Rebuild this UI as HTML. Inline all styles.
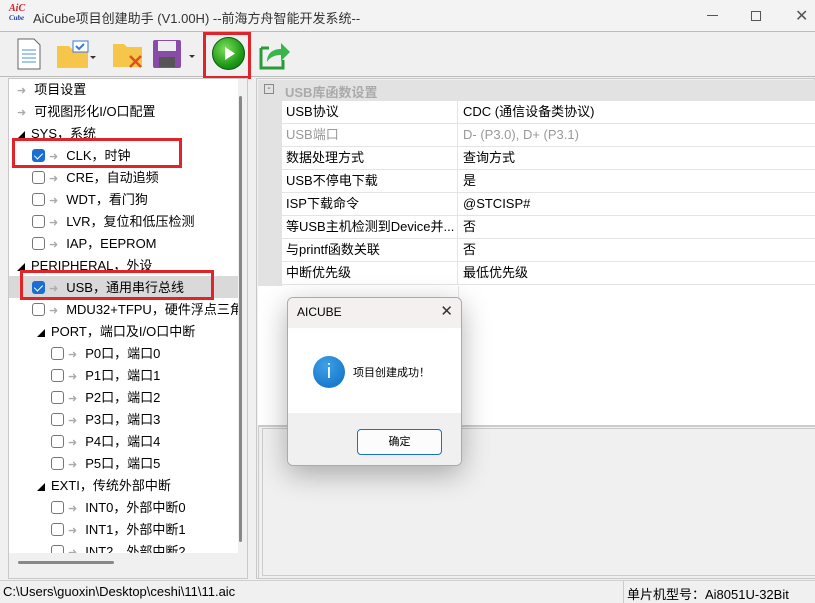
<!DOCTYPE html>
<html><head><meta charset="utf-8"><style>
*{margin:0;padding:0;box-sizing:border-box}
body{width:815px;height:603px;overflow:hidden;background:#f0f0f0;font-family:"Liberation Sans","Noto Sans CJK SC",sans-serif;font-size:13px;color:#000;position:relative}
.a{position:absolute}
.tr{position:absolute;height:22px;line-height:22px;white-space:nowrap;font-size:13px}
.cb{display:inline-block;width:13px;height:13px;border:1px solid #777;border-radius:3px;vertical-align:-2px;background:#fff}
.cb.on{background:#1a6fd0;border-color:#1a6fd0;position:relative}
.cb.on:after{content:"";position:absolute;left:3px;top:1px;width:4px;height:7px;border:solid #fff;border-width:0 1.5px 1.5px 0;transform:rotate(45deg)}
.ar{color:#aaa;font-size:11px;margin:0 8px 0 4px}
.row{position:absolute;left:282px;width:533px;height:23px;border-bottom:1px solid #e4e4e4;background:#fff;line-height:22px}
.row span{position:absolute;left:4px}
.row b{font-weight:normal;position:absolute;left:181px}
.row i{position:absolute;left:175px;top:0;bottom:0;border-left:1px solid #e4e4e4}
</style></head><body>
<!-- title bar -->
<div class="a" style="left:0;top:0;width:815px;height:32px;background:#f3f3f3;border-bottom:1px solid #bbb"></div>
<div class="a" style="left:9px;top:4px;font:italic bold 10px 'Liberation Serif',serif;color:#d0202a;line-height:9px">AiC<br><span style="font-size:7px;color:#1c3f9c">Cube</span></div>
<div class="a" style="left:33px;top:8px;font-size:13px;color:#333">AiCube项目创建助手 (V1.00H) --前海方舟智能开发系统--</div>
<div class="a" style="left:707px;top:15px;width:11px;height:1px;background:#555"></div>
<div class="a" style="left:751px;top:11px;width:10px;height:10px;border:1px solid #555"></div>
<div class="a" style="left:795px;top:6px;font-size:16px;color:#555">✕</div>
<!-- toolbar -->
<div class="a" style="left:0;top:33px;width:815px;height:44px;background:#f0f0f0;border-bottom:1px solid #bbb"></div>
<svg class="a" style="left:16px;top:38px" width="26" height="32"><path d="M2 1h16l6 6v24H2z" fill="#fff" stroke="#666"/><path d="M6 12h14M6 16h14M6 20h14M6 24h14" stroke="#4a8fd8"/></svg>
<svg class="a" style="left:56px;top:40px" width="40" height="30"><path d="M1 6h12l3 3h16v19H1z" fill="#f6c64a"/><rect x="17" y="1" width="15" height="11" fill="#fff" stroke="#3a7bd5"/><path d="M20 6l3 3 5-5" stroke="#3a7bd5" fill="none" stroke-width="2"/><path d="M34 16l3 3 3-3z" fill="#333"/></svg>
<svg class="a" style="left:112px;top:40px" width="32" height="30"><path d="M1 4h11l3 3h15v20H1z" fill="#f6c64a"/><path d="M18 16l11 11M29 16l-11 11" stroke="#e05020" stroke-width="2.5"/></svg>
<svg class="a" style="left:152px;top:39px" width="45" height="31"><rect x="1" y="1" width="28" height="28" rx="2" fill="#8a4aa8"/><rect x="6" y="2" width="18" height="10" fill="#eee"/><rect x="7" y="18" width="16" height="10" fill="#555"/><path d="M37 16l3 3 3-3z" fill="#333"/></svg>
<div class="a" style="left:203px;top:32px;width:48px;height:47px;border:3px solid #e0242a"></div>
<div class="a" style="left:212px;top:37px;width:33px;height:33px;border-radius:50%;background:radial-gradient(circle at 40% 35%,#7ce05a,#1f9a1a 60%,#0d6a0d);border:1px solid #0a5a0a"></div>
<svg class="a" style="left:212px;top:37px" width="33" height="33"><path d="M13 10l10 6.5-10 6.5z" fill="#fff"/></svg>
<svg class="a" style="left:259px;top:38px" width="33" height="32"><path d="M2 10h8M2 10v20h22v-8" stroke="#2a9a3a" stroke-width="3" fill="none"/><path d="M8 24c0-9 6-13 14-13V5l9 9-9 9v-6c-6 0-11 2-14 7z" fill="#3ab54a"/></svg>
<!-- left tree panel -->
<div class="a" style="left:8px;top:78px;width:240px;height:501px;background:#f0f0f0;border:1px solid #c8c8c8"></div>
<div class="a" style="left:9px;top:79px;width:229px;height:474px;background:#fff"></div>
<div class="a" style="left:239px;top:96px;width:3px;height:446px;background:#888;border-radius:2px"></div>
<div class="a" style="left:18px;top:561px;width:96px;height:3px;background:#888;border-radius:2px"></div>
<div class="a" style="left:9px;top:276px;width:229px;height:22px;background:#d9d9d9"></div>
<div style="position:absolute;left:9px;top:79px;width:229px;height:474px;overflow:hidden">
<div class="tr" style="left:8px;top:0"><span class="ar" style="margin-left:0">➜</span>项目设置</div>
<div class="tr" style="left:8px;top:22px"><span class="ar" style="margin-left:0">➜</span>可视图形化I/O口配置</div>
<div class="tr" style="left:8px;top:44px"><span style="font-size:8px;margin-right:6px">◢</span>SYS，系统</div>
<div class="tr" style="left:23px;top:66px"><span class="cb on"></span><span class="ar">➜</span>CLK，时钟</div>
<div class="tr" style="left:23px;top:88px"><span class="cb"></span><span class="ar">➜</span>CRE，自动追频</div>
<div class="tr" style="left:23px;top:110px"><span class="cb"></span><span class="ar">➜</span>WDT，看门狗</div>
<div class="tr" style="left:23px;top:132px"><span class="cb"></span><span class="ar">➜</span>LVR，复位和低压检测</div>
<div class="tr" style="left:23px;top:154px"><span class="cb"></span><span class="ar">➜</span>IAP，EEPROM</div>
<div class="tr" style="left:8px;top:176px"><span style="font-size:8px;margin-right:6px">◢</span>PERIPHERAL，外设</div>
<div class="tr" style="left:23px;top:198px"><span class="cb on"></span><span class="ar">➜</span>USB，通用串行总线</div>
<div class="tr" style="left:23px;top:220px"><span class="cb"></span><span class="ar">➜</span>MDU32+TFPU，硬件浮点三角</div>
<div class="tr" style="left:28px;top:242px"><span style="font-size:8px;margin-right:6px">◢</span>PORT，端口及I/O口中断</div>
<div class="tr" style="left:42px;top:264px"><span class="cb"></span><span class="ar">➜</span>P0口，端口0</div>
<div class="tr" style="left:42px;top:286px"><span class="cb"></span><span class="ar">➜</span>P1口，端口1</div>
<div class="tr" style="left:42px;top:308px"><span class="cb"></span><span class="ar">➜</span>P2口，端口2</div>
<div class="tr" style="left:42px;top:330px"><span class="cb"></span><span class="ar">➜</span>P3口，端口3</div>
<div class="tr" style="left:42px;top:352px"><span class="cb"></span><span class="ar">➜</span>P4口，端口4</div>
<div class="tr" style="left:42px;top:374px"><span class="cb"></span><span class="ar">➜</span>P5口，端口5</div>
<div class="tr" style="left:28px;top:396px"><span style="font-size:8px;margin-right:6px">◢</span>EXTI，传统外部中断</div>
<div class="tr" style="left:42px;top:418px"><span class="cb"></span><span class="ar">➜</span>INT0，外部中断0</div>
<div class="tr" style="left:42px;top:440px"><span class="cb"></span><span class="ar">➜</span>INT1，外部中断1</div>
<div class="tr" style="left:42px;top:462px"><span class="cb"></span><span class="ar">➜</span>INT2，外部中断2</div>
</div>
<div class="a" style="left:12px;top:138px;width:170px;height:30px;border:3px solid #e0242a"></div>
<div class="a" style="left:20px;top:270px;width:194px;height:30px;border:3px solid #e0242a"></div>
<!-- right panel -->
<div class="a" style="left:256px;top:78px;width:559px;height:501px;background:#f0f0f0;border:1px solid #c8c8c8"></div>
<div class="a" style="left:258px;top:80px;width:557px;height:345px;background:#fff"></div>
<div class="a" style="left:258px;top:80px;width:557px;height:21px;background:#e2e2e2"></div>
<div class="a" style="left:258px;top:101px;width:24px;height:185px;background:#e2e2e2"></div>
<div class="a" style="left:264px;top:84px;width:10px;height:10px;border:1px solid #888;font-size:10px;line-height:7px;text-align:center;color:#666">-</div>
<div class="a" style="left:285px;top:82px;font-weight:bold;color:#aaa;font-size:13px">USB库函数设置</div>
<div class="row" style="top:101px"><span>USB协议</span><i></i><b>CDC (通信设备类协议)</b></div>
<div class="row" style="top:124px;color:#999"><span>USB端口</span><i></i><b>D- (P3.0), D+ (P3.1)</b></div>
<div class="row" style="top:147px"><span>数据处理方式</span><i></i><b>查询方式</b></div>
<div class="row" style="top:170px"><span>USB不停电下载</span><i></i><b>是</b></div>
<div class="row" style="top:193px"><span>ISP下载命令</span><i></i><b>@STCISP#</b></div>
<div class="row" style="top:216px"><span>等USB主机检测到Device并...</span><i></i><b>否</b></div>
<div class="row" style="top:239px"><span>与printf函数关联</span><i></i><b>否</b></div>
<div class="row" style="top:262px"><span>中断优先级</span><i></i><b>最低优先级</b></div>
<div class="a" style="left:458px;top:286px;width:1px;height:139px;background:#e4e4e4"></div>
<div class="a" style="left:258px;top:425px;width:557px;height:153px;background:#f0f0f0;border-top:2px solid #ccc;border-left:1px solid #ccc"></div>
<div class="a" style="left:262px;top:428px;width:553px;height:148px;border:1px solid #ccc;border-right:none"></div>
<!-- status -->
<div class="a" style="left:0;top:580px;width:815px;height:23px;background:#f0f0f0;border-top:1px solid #d0d0d0"></div>
<div class="a" style="left:3px;top:584px;font-size:13px">C:\Users\guoxin\Desktop\ceshi\11\11.aic</div>
<div class="a" style="left:623px;top:581px;width:1px;height:22px;background:#ccc"></div>
<div class="a" style="left:627px;top:584px;font-size:13px">单片机型号：Ai8051U-32Bit</div>
<!-- dialog -->
<div class="a" style="left:287px;top:297px;width:175px;height:169px;background:#fff;border:1px solid #aaa;border-radius:6px;box-shadow:0 8px 28px rgba(0,0,0,.3);overflow:hidden">
<div style="height:30px;background:#f3f0ef;font-size:12px;line-height:28px;padding-left:9px">AICUBE<span style="position:absolute;right:8px;top:0;font-size:15px;color:#333">✕</span></div>
<div style="position:absolute;left:25px;top:58px;width:32px;height:32px;border-radius:50%;background:radial-gradient(circle at 40% 30%,#3fa0e8,#0b6cc4);color:#fff;font-size:20px;text-align:center;line-height:32px">i</div>
<div style="position:absolute;left:65px;top:66px;font-size:11px">项目创建成功！</div>
<div style="position:absolute;left:0;top:115px;width:175px;height:54px;background:#f0f0f0"></div>
<div style="position:absolute;left:69px;top:131px;width:85px;height:26px;border:1px solid #1a6fd0;border-radius:4px;background:#fcfcfc;font-size:11px;text-align:center;line-height:24px">确定</div>
</div>
</body></html>
